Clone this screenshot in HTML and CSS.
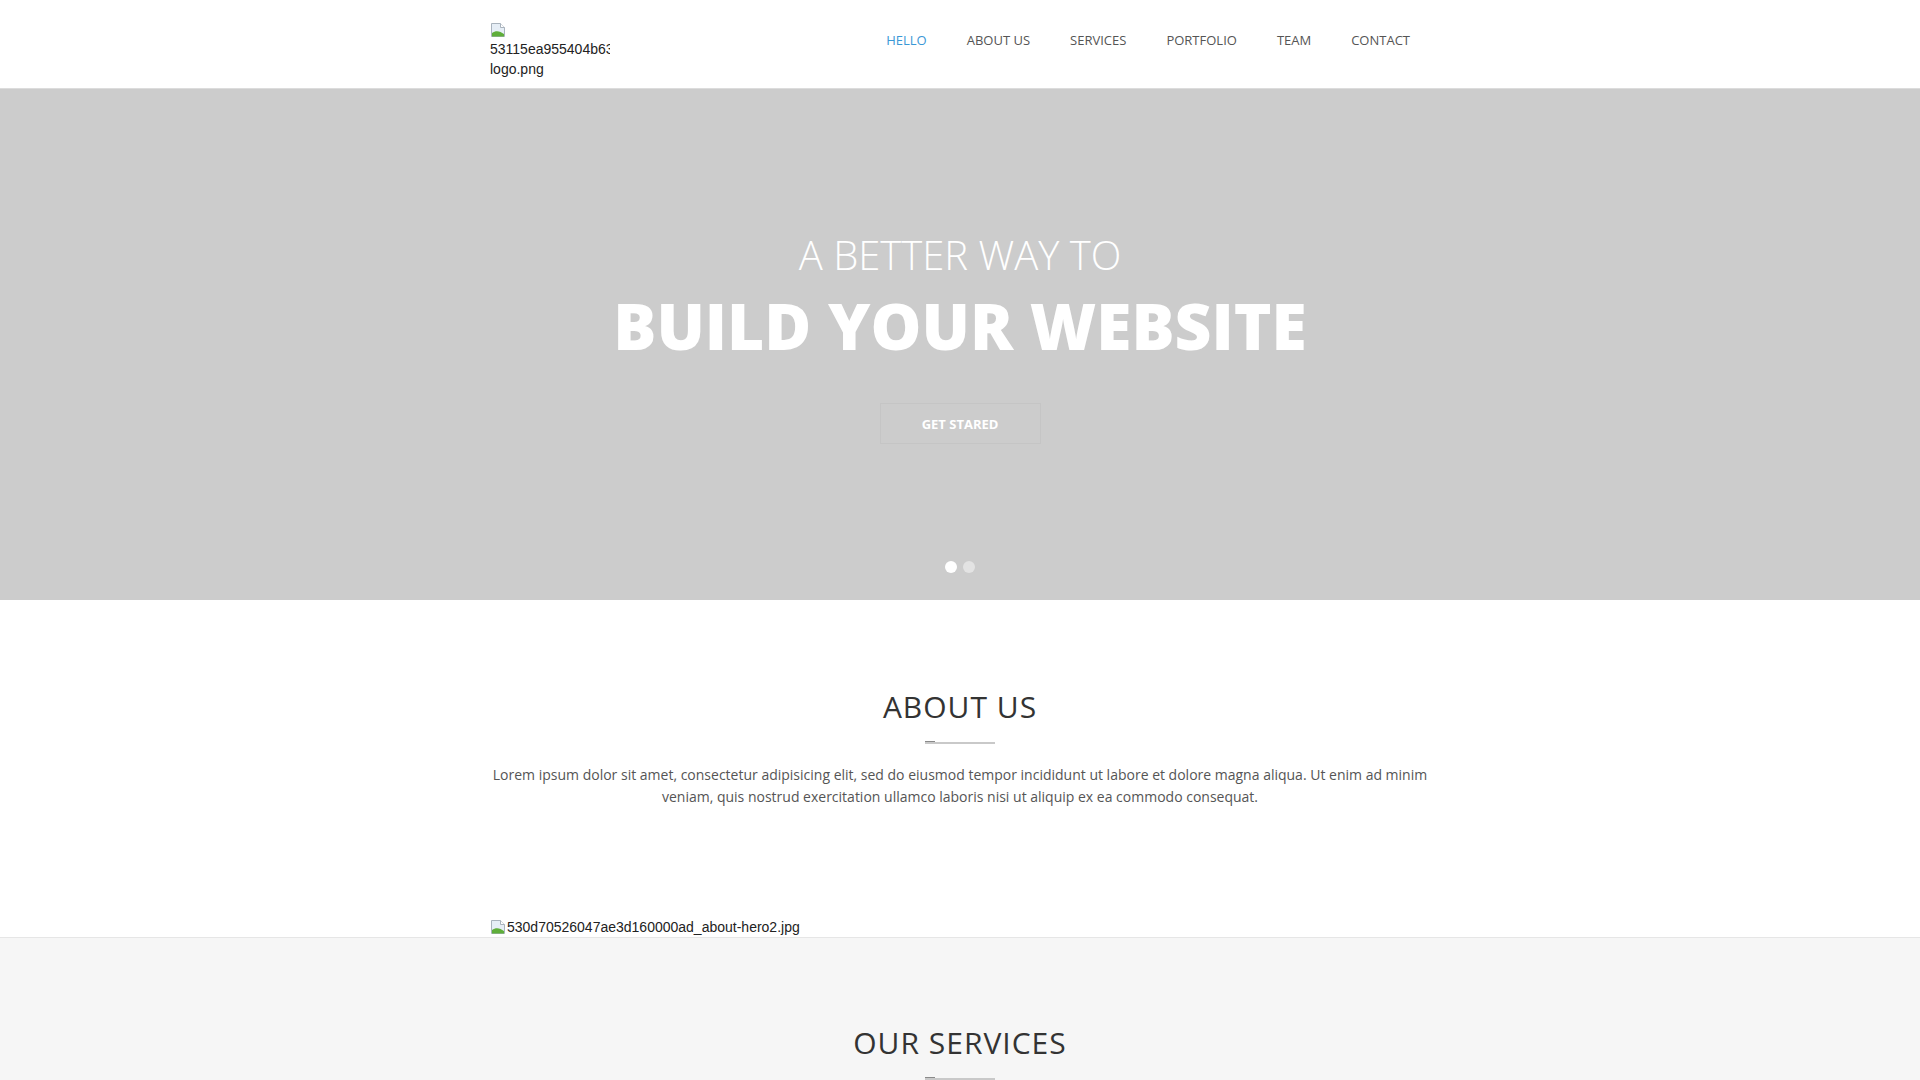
FILE: index.html
```html
<!DOCTYPE html>
<html lang="en">
<head>
<meta charset="utf-8">
<title>Landing</title>
<link rel="stylesheet" href="styles.css">
</head>
<body>
<header class="site-header">
  <div class="container header-inner">
    <div class="logo">
      <div class="logo-line"><svg class="broken" width="16" height="16" viewBox="0 0 16 16"><path d="M1.5 1.5h9l4 4v9h-13z" fill="#e6eef6" stroke="#a9b3bd"/><path d="M10.5 1.5v4h4" fill="#fff" stroke="#a9b3bd"/><path d="M2 14.5 L2 11 C6 8 10 9 14 12 L14 14.5Z" fill="#5fae3a"/></svg></div>
      <div class="logo-line">53115ea955404b63a3c1d2e4</div>
      <div class="logo-line">logo.png</div>
    </div>
    <nav class="nav">
      <a class="nav-link active" href="#">HELLO</a>
      <a class="nav-link" href="#">ABOUT US</a>
      <a class="nav-link" href="#">SERVICES</a>
      <a class="nav-link" href="#">PORTFOLIO</a>
      <a class="nav-link" href="#">TEAM</a>
      <a class="nav-link" href="#">CONTACT</a>
    </nav>
  </div>
</header>

<section class="hero">
  <p class="hero-sub">A BETTER WAY TO</p>
  <h1 class="hero-title">BUILD YOUR WEBSITE</h1>
  <a class="hero-btn" href="#">GET STARED</a>
  <div class="dots"><span class="dot on"></span><span class="dot"></span></div>
</section>

<section class="about">
  <div class="container center">
    <h2 class="section-title">ABOUT US</h2>
    <div class="divider"></div>
    <p class="lead">Lorem ipsum dolor sit amet, consectetur adipisicing elit, sed do eiusmod tempor incididunt ut labore et dolore magna aliqua. Ut enim ad minim veniam, quis nostrud exercitation ullamco laboris nisi ut aliquip ex ea commodo consequat.</p>
  </div>
  <div class="container">
    <div class="alt-img"><svg class="broken" width="16" height="16" viewBox="0 0 16 16"><path d="M1.5 1.5h9l4 4v9h-13z" fill="#e6eef6" stroke="#a9b3bd"/><path d="M10.5 1.5v4h4" fill="#fff" stroke="#a9b3bd"/><path d="M2 14.5 L2 11 C6 8 10 9 14 12 L14 14.5Z" fill="#5fae3a"/></svg><span>530d70526047ae3d160000ad_about-hero2.jpg</span></div>
  </div>
</section>

<section class="services">
  <div class="container center">
    <h2 class="section-title">OUR SERVICES</h2>
    <div class="divider"></div>
  </div>
</section>
</body>
</html>
```

FILE: styles.css
```css
* { box-sizing: border-box; }
html, body { margin: 0; padding: 0; }
body {
  font-family: "Open Sans", "Liberation Sans", Arial, sans-serif;
  background: #fff;
  color: #555;
  overflow: hidden;
}
.container {
  width: 940px;
  margin: 0 auto;
}
.center { text-align: center; }

/* header */
.site-header {
  height: 89px;
  border-bottom: 1px solid #dcdcdc;
  background: #fff;
}
.header-inner {
  display: flex;
  justify-content: space-between;
  align-items: flex-start;
}
.logo {
  width: 120px;
  overflow: hidden;
  padding-top: 19px;
  font-family: "Liberation Sans", Arial, sans-serif;
  font-size: 14px;
  line-height: 20px;
  color: #222;
}
.logo-line {
  white-space: nowrap;
  height: 20px;
}
.logo-line .broken { display: block; box-sizing: content-box; padding-top: 3px; }
.nav {
  display: flex;
  padding-top: 31px;
}
.nav-link {
  display: block;
  padding: 0 20px;
  font-size: 13px;
  line-height: 18px;
  color: #555;
  text-decoration: none;
}
.nav-link.active { color: #3a98d6; }

/* hero */
.hero {
  position: relative;
  height: 511px;
  background: #cccccc;
  text-align: center;
  padding-top: 144px;
  color: #fff;
}
.hero-sub {
  margin: 0;
  font-size: 40px;
  font-weight: 300;
  line-height: 44px;
}
.hero-title {
  margin: 14px 0 0;
  font-size: 64px;
  font-weight: 800;
  line-height: 70px;
  letter-spacing: 0;
}
.hero-btn {
  display: inline-block;
  margin-top: 42px;
  width: 161px;
  height: 41px;
  border: 1px solid #c5c5c5;
  font-size: 13px;
  font-weight: 700;
  line-height: 41px;
  color: #fff;
  text-decoration: none;
}
.dots {
  position: absolute;
  left: 0;
  right: 0;
  bottom: 27px;
  display: flex;
  justify-content: center;
  gap: 6px;
}
.dot {
  width: 12px;
  height: 12px;
  border-radius: 50%;
  background: rgba(255,255,255,0.45);
}
.dot.on { background: #fff; }

/* sections */
.section-title {
  margin: 0;
  font-size: 30px;
  font-weight: 400;
  line-height: 40px;
  letter-spacing: 1px;
  color: #333;
}
.divider {
  position: relative;
  width: 70px;
  height: 2px;
  margin: 15px auto 0;
  background: #c9c9c9;
}
.divider::before {
  content: "";
  position: absolute;
  left: 0;
  top: -1px;
  width: 10px;
  height: 1px;
  background: #8a8a8a;
}
.about {
  padding-top: 87px;
  background: #fff;
}
.lead {
  margin: 20px 0 0;
  font-size: 14px;
  line-height: 22px;
  color: #555;
}
.alt-img {
  margin-top: 109px;
  height: 20px;
  display: flex;
  align-items: center;
  font-family: "Liberation Sans", Arial, sans-serif;
  font-size: 14px;
  line-height: 20px;
  color: #222;
}
.alt-img .broken { flex: none; margin-right: 1px; }
.services {
  border-top: 1px solid #e6e6e6;
  background: #f6f6f6;
  padding-top: 85px;
  height: 400px;
}
```
